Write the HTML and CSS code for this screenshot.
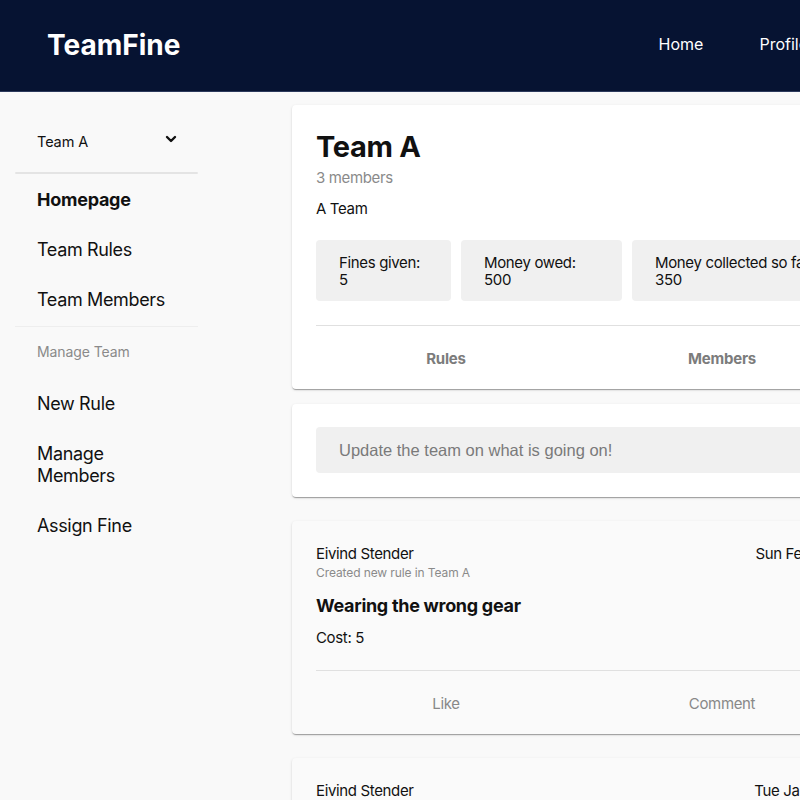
FILE: index.html
```html
<!DOCTYPE html>
<html lang="en">
<head>
<meta charset="utf-8">
<title>TeamFine</title>
<link rel="stylesheet" href="styles.css">
</head>
<body>
<header class="topbar">
  <div class="logo">TeamFine</div>
  <nav class="topnav">
    <a class="topnav-link" href="#">Home</a>
    <a class="topnav-link" href="#">Profile</a>
  </nav>
</header>
<div class="layout">
  <aside class="sidebar">
    <div class="team-select">
      <span>Team A</span>
      <svg class="chevron" width="12" height="8" viewBox="0 0 12 8"><polyline points="2,2 6,6 10,2" fill="none" stroke="#111" stroke-width="2.4" stroke-linecap="round" stroke-linejoin="round"/></svg>
    </div>
    <div class="side-sep strong"></div>
    <a class="side-link active" href="#">Homepage</a>
    <a class="side-link" href="#">Team Rules</a>
    <a class="side-link" href="#">Team Members</a>
    <div class="side-sep"></div>
    <div class="side-label">Manage Team</div>
    <a class="side-link" href="#">New Rule</a>
    <a class="side-link narrow" href="#">Manage Members</a>
    <a class="side-link" href="#">Assign Fine</a>
  </aside>
  <main class="main">
    <section class="card team-card">
      <h1 class="team-title">Team A</h1>
      <div class="team-count">3 members</div>
      <div class="team-desc">A Team</div>
      <div class="stats">
        <div class="stat stat-fines">Fines given:<br>5</div>
        <div class="stat stat-owed">Money owed:<br>500</div>
        <div class="stat stat-collected">Money collected so far:<br>350</div>
      </div>
      <div class="card-sep"></div>
      <div class="tabs">
        <div class="tab bold">Rules</div>
        <div class="tab bold">Members</div>
      </div>
    </section>
    <section class="card update-card">
      <div class="update-input">Update the team on what is going on!</div>
    </section>
    <section class="card post">
      <div class="post-head">
        <div class="post-author">Eivind Stender</div>
        <div class="post-date">Sun Feb 14 2021</div>
      </div>
      <div class="post-sub">Created new rule in Team A</div>
      <div class="post-title">Wearing the wrong gear</div>
      <div class="post-cost">Cost: 5</div>
      <div class="card-sep"></div>
      <div class="tabs">
        <div class="tab">Like</div>
        <div class="tab">Comment</div>
      </div>
    </section>
    <section class="card post">
      <div class="post-head">
        <div class="post-author">Eivind Stender</div>
        <div class="post-date">Tue Jan 26 2021</div>
      </div>
      <div class="post-sub">Created new rule in Team A</div>
      <div class="post-title">Arriving late</div>
      <div class="post-cost">Cost: 10</div>
    </section>
  </main>
</div>
</body>
</html>
```

FILE: styles.css
```css
html, body {
  margin: 0;
  padding: 0;
  overflow: hidden;
}
body {
  background: #f9f9f9;
  font-family: "Inter", "Noto Sans", sans-serif;
  color: #111;
  width: 1000px;
  letter-spacing: -0.35px;
}
a { color: inherit; text-decoration: none; }

.topbar {
  height: 91px;
  background: #061332;
  border-bottom: 1px solid #2c3a5c;
  display: flex;
  align-items: center;
  justify-content: space-between;
  padding-left: 47px;
  box-sizing: content-box;
  width: 953px;
}
.logo {
  color: #fff;
  font-weight: 700;
  font-size: 28px;
  letter-spacing: 0;
  margin-top: -1px;
}
.topnav {
  display: flex;
  gap: 56px;
  margin-right: 192px;
  margin-top: -3px;
}
.topnav-link {
  color: #fff;
  font-size: 16px;
  letter-spacing: 0;
}

.layout {
  display: flex;
  align-items: flex-start;
}

.sidebar {
  width: 183px;
  padding: 24px 0 0 15px;
  flex-shrink: 0;
}
.team-select {
  height: 50px;
  display: flex;
  align-items: center;
  justify-content: space-between;
  padding: 0 21px 0 22px;
  font-size: 14.5px;
  letter-spacing: -0.1px;
  margin-bottom: 6px;
}
.chevron { margin-top: -4px; }
.side-sep {
  height: 1px;
  background: #eeeeee;
  margin: 2px 0 1px;
}
.side-sep.strong {
  height: 2px;
  background: #e4e4e4;
  border-radius: 2px;
  margin: 0;
}
.side-link {
  display: block;
  padding: 15px 22px 13px;
  font-size: 18px;
  line-height: 22px;
}
.side-link.active { font-weight: 700; letter-spacing: -0.25px; }
.side-link.narrow { width: 120px; }
.side-label {
  padding: 13px 22px 15px;
  font-size: 14px;
  line-height: 22px;
  color: #8a8a8a;
  letter-spacing: -0.1px;
}

.main {
  margin-left: 94px;
  padding-top: 13px;
  width: 598px;
  flex-shrink: 0;
}
.card {
  background: #fff;
  border-radius: 4px;
  box-shadow: 0 2px 1px -1px rgba(0,0,0,.2), 0 1px 1px 0 rgba(0,0,0,.14), 0 1px 3px 0 rgba(0,0,0,.12);
  padding: 24px 24px 0;
}
.team-card { margin-bottom: 15px; }
.team-title {
  margin: 0;
  font-size: 29px;
  line-height: 36px;
  font-weight: 700;
  letter-spacing: -0.3px;
}
.team-count {
  margin-top: 2px;
  font-size: 15px;
  line-height: 22px;
  color: #8a8a8a;
}
.team-desc {
  margin-top: 9px;
  font-size: 15px;
  line-height: 22px;
}
.stats {
  display: flex;
  gap: 10px;
  margin-top: 20px;
}
.stat {
  background: #f0f0f0;
  border-radius: 4px;
  padding: 14px 23px 13px;
  font-size: 15px;
  line-height: 17px;
  flex-shrink: 0;
  box-sizing: border-box;
}
.stat-fines { width: 135px; }
.stat-owed { width: 161px; }
.stat-collected { width: 230px; }
.card-sep {
  height: 1px;
  background: #e0e0e0;
  margin-top: 24px;
}
.tabs {
  display: grid;
  grid-template-columns: 260px 260px;
  gap: 16px;
  height: 63px;
  align-items: center;
}
.tab {
  text-align: center;
  font-size: 15px;
  color: #7c7c7c;
  padding-top: 1px;
}
.tab.bold { font-weight: 700; letter-spacing: -0.2px; }

.update-card {
  padding: 23px 24px 24px;
  margin-bottom: 24px;
}
.update-input {
  background: #f0f0f0;
  border-radius: 4px;
  height: 46px;
  display: flex;
  align-items: center;
  padding-left: 23px;
  font-family: "Liberation Sans", Arial, sans-serif;
  font-size: 16.5px;
  letter-spacing: 0;
  color: #7a7a7a;
}

.post {
  background: #fafafa;
  margin-bottom: 24px;
}
.post-head {
  display: flex;
  justify-content: space-between;
  font-size: 15px;
  line-height: 17px;
}
.post-sub {
  margin-top: 3px;
  font-size: 12px;
  line-height: 16px;
  color: #8a8a8a;
  letter-spacing: -0.1px;
}
.post-title {
  margin-top: 13px;
  font-size: 18px;
  line-height: 24px;
  font-weight: 700;
  letter-spacing: -0.3px;
}
.post-cost {
  margin-top: 9px;
  font-size: 15px;
  line-height: 22px;
}
.post .card-sep { margin-top: 21px; }
.post .tab { font-size: 15px; color: #888; }
```
